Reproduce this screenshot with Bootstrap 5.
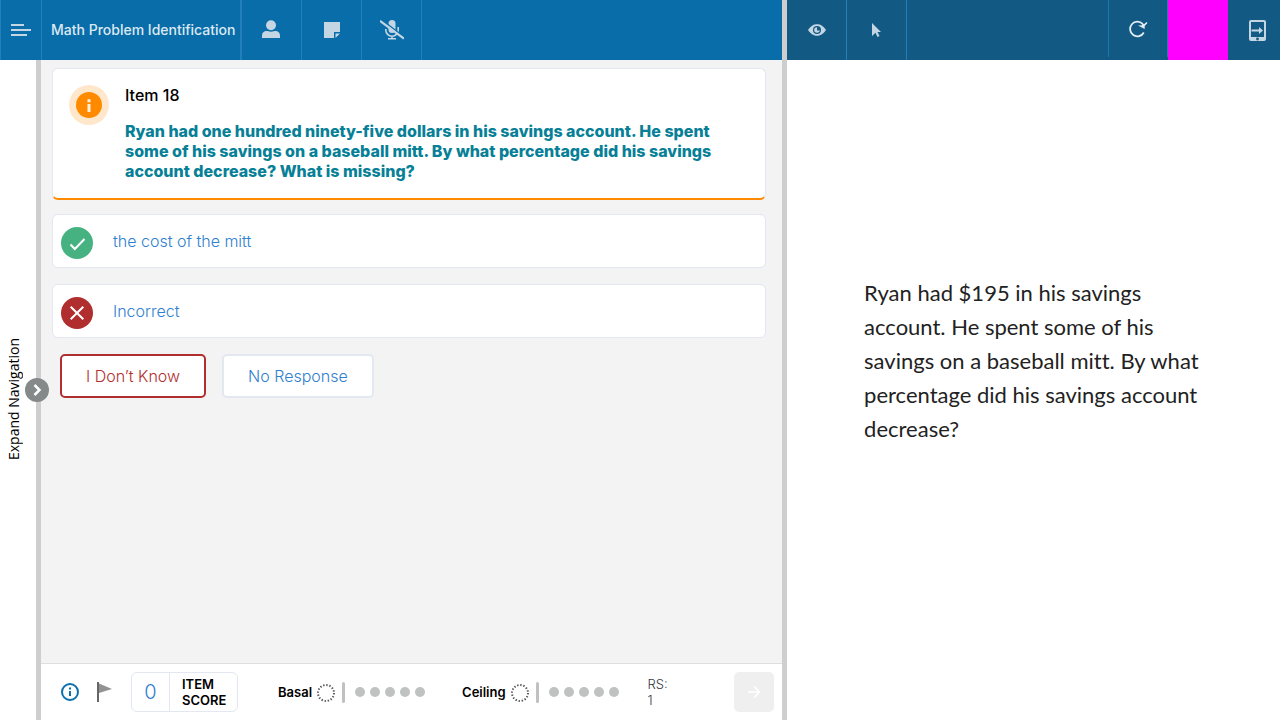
<!DOCTYPE html>
<html lang="en">
<head>
<meta charset="utf-8">
<meta name="viewport" content="width=device-width, initial-scale=1">
<title>Math Problem Identification</title>
<link href="https://cdn.jsdelivr.net/npm/bootstrap@5.3.0/dist/css/bootstrap.min.css" rel="stylesheet">
<style>
  body { font-family: Inter, "Liberation Sans", sans-serif; color: #000; background: #fff; }
  svg { display: block; }
  .examiner { flex: 0 0 61.1%; min-width: 0; }
  .examinee { min-width: 0; }
  .splitter { flex: 0 0 5px; background: #cecece; }
  .topbar { flex: 0 0 60px; background: #096da9; }
  .topbar.viewer { background: #125a84; }
  .tool { width: 60px; height: 60px; padding: 0; border: 0; border-right: 1px solid #227fb9; background: transparent; color: #c4d5e3; display: flex; align-items: center; justify-content: center; }
  .tool.menu { width: 42px; border-left: 1px solid #227fb9; }
  .tool.reload { height: 57px; border-left: 1px solid #1d78b0; color: #e3eef6; }
  .tool.last { width: 52px; border: 0; padding-left: 6px; }
  .subtest { width: 200px; padding-left: 9px; border-right: 2px solid #227fb9; color: #dce9f3; font-size: 14px; font-weight: 500; line-height: 60px; white-space: nowrap; }
  .swatch { width: 60px; background: #f0f; }
  .workspace { min-height: 0; }
  .rail { flex: 0 0 36px; background: #fff; border: 0; padding: 18px 8px 0 0; font-family: "Open Sans", sans-serif; font-size: 14px; line-height: 20px; color: #000; display: flex; align-items: center; justify-content: center; }
  .rail span { writing-mode: vertical-rl; transform: rotate(180deg); white-space: nowrap; }
  .knob { z-index: 2; width: 24px; height: 24px; right: -8px; top: 50%; margin-top: -12px; border: 0; padding: 0; border-radius: 50%; background: #858989; }
  .work { background: #f3f3f3; min-width: 0; }
  .content-area { padding: 8px 16px 8px 11px; }
  .panel { background: #fff; border: 1px solid #e2e7f1; border-radius: 6px; }
  .question { padding: 16px; gap: 16px; border-bottom: 2px solid #ff8a00; min-height: 132px; margin-bottom: 14px; }
  .halo { flex: 0 0 40px; height: 40px; }
  .question h1 { font-size: 16px; font-weight: 500; line-height: 20px; margin: 0 0 16px; }
  .question p { font-size: 16px; font-weight: 800; line-height: 20px; color: #078097; margin: 0; max-width: 600px; }
  .answer { width: 100%; height: 54px; margin-bottom: 16px; padding: 4px 8px 0; gap: 20px; text-align: left; color: #2f7fd0; font-size: 16px; font-weight: 300; }
  .answer span { padding-bottom: 4px; }
  .choice { height: 44px; padding: 0 24px; border: 2px solid #e2e7f1; border-radius: 5px; background: #fff; color: #2f7fd0; font-size: 16px; font-weight: 300; }
  .choice.chosen { border-color: #b02e2e; color: #b02e2e; }
  .statusbar { flex: 0 0 57px; background: #fff; border-top: 1px solid #dedede; padding: 0 8px 0 20px; font-size: 13px; line-height: 16px; }
  .plain { border: 0; padding: 0; background: none; }
  .flag { margin-left: 18px; }
  .score { width: 107px; height: 40px; margin-left: 18px; font-weight: 600; }
  .score output { width: 38px; line-height: 38px; border-right: 1px solid #e2e7f1; text-align: center; color: #2f7fd0; font-size: 20px; font-weight: 300; }
  .score label { padding: 3px 0 0 12px; }
  .rule-name { font-weight: 600; }
  .basal { margin-left: 40px; }
  .ceiling { margin-left: 37px; }
  .bar { width: 3px; height: 21px; border-radius: 2px; background: #bfc2c1; margin: 0 10px 0 6px; }
  .pips { gap: 5px; }
  .pip { width: 10px; height: 10px; border-radius: 50%; background: #c0c2c1; }
  .raw { margin-left: 29px; width: 24px; color: #343a40; font-weight: 300; }
  .next { width: 40px; height: 40px; padding: 0; border: 0; border-radius: 5px; background: #efefef; display: flex; align-items: center; justify-content: center; }
  .stimulus { font-family: Lato, sans-serif; font-variant-ligatures: none; font-size: 22px; line-height: 34px; color: #222; padding: 216px 70px 16px 77px; }
</style>
</head>
<body class="d-flex vh-100 overflow-hidden">
<section class="examiner d-flex flex-column">
  <header class="topbar d-flex">
    <button class="tool menu" aria-label="Menu"><svg width="20" height="14" fill="currentColor"><path d="M0 1h13v2H0zM0 6h20v2H0zM0 11h16v2H0z"/></svg></button>
    <div class="subtest">Math Problem Identification</div>
    <button class="tool" aria-label="Examinee"><svg width="20" height="20" fill="currentColor"><circle cx="9" cy="5.200" r="5"/><path d="M0 18v-2.500c0-3 2-4.500 4.500-4.500 1 0 2.500.7 4.500.7s3.500-.7 4.500-.7c2.500 0 4.500 1.500 4.500 4.500V18z"/></svg></button>
    <button class="tool" aria-label="Notes"><svg width="16" height="16" fill="currentColor"><path d="M0 0h16v10h-6v6H0zM11.500 11.500H16L11.500 16z"/></svg></button>
    <button class="tool" aria-label="Microphone off"><svg width="24" height="20" fill="none" stroke="currentColor"><rect x="8.500" y="0" width="7" height="13" rx="3.500" fill="currentColor" stroke="none"/><path stroke-width="1.600" d="M5.800 9v1a6.200 6.200 0 0 0 12.400 0V7M12 16v3M8 18.800h8"/><path stroke="#096da9" stroke-width="1.500" d="M2 0l22 17"/><path stroke-width="2.200" d="M0 1l24 17.500"/></svg></button>
  </header>
  <div class="workspace d-flex flex-grow-1">
    <div class="d-flex position-relative">
      <button class="rail"><span>Expand Navigation</span></button>
      <div class="splitter"></div>
      <button class="knob position-absolute" aria-label="Expand"><svg width="24" height="24" fill="none" stroke="#fff" stroke-width="2.500"><path d="M9.500 7l5 5-5 5"/></svg></button>
    </div>
    <main class="work flex-grow-1 d-flex flex-column">
      <div class="content-area flex-grow-1 overflow-auto">
        <div class="panel question d-flex">
          <svg class="halo" width="40" height="40"><circle cx="20" cy="20" r="20" fill="#ffe7cc"/><circle cx="20" cy="20" r="13" fill="#ff8a00"/><path fill="#fff0dc" d="M18.500 14.300h3v3h-3zM18.500 19h3v8h-3z"/></svg>
          <div><h1>Item 18</h1><p>Ryan had one hundred ninety-five dollars in his savings account. He spent some of his savings on a baseball mitt. By what percentage did his savings account decrease? What is missing?</p></div>
        </div>
        <button class="panel answer d-flex align-items-center">
          <svg width="32" height="32" fill="none" stroke="#fff" stroke-width="2"><circle cx="16" cy="16" r="16" fill="#47b281" stroke="none"/><path d="M9.500 17.500l4.300 4.500L23.500 12"/></svg><span>the cost of the mitt</span>
        </button>
        <button class="panel answer d-flex align-items-center">
          <svg width="32" height="32" fill="none" stroke="#fff" stroke-width="2"><circle cx="16" cy="16" r="16" fill="#b02e2e" stroke="none"/><path d="M9.700 9.700l12.600 12.600M22.300 9.700L9.700 22.300"/></svg><span>Incorrect</span>
        </button>
        <div class="d-flex gap-3 ps-2"><button class="choice chosen">I Don’t Know</button><button class="choice">No Response</button></div>
      </div>
      <footer class="statusbar d-flex align-items-center">
        <button class="plain" aria-label="Information"><svg width="18" height="18" fill="none" stroke="#0c70ad" stroke-width="2"><circle cx="9" cy="9" r="8"/><path d="M9 4.500v2M9 8v5"/></svg></button>
        <button class="plain flag" aria-label="Flag"><svg width="16" height="20"><path fill="#666" d="M0 0h2v20H0z"/><path fill="#929292" d="M2 1.500L15 7 2 11z"/></svg></button>
        <div class="panel score d-flex"><output id="score">0</output><label for="score">ITEM<br>SCORE</label></div>
        <div class="basal d-flex align-items-center"><span class="rule-name">Basal</span><svg class="ms-1" width="20" height="20" fill="none" stroke="#555" stroke-width="2"><circle cx="10" cy="11" r="8" stroke-dasharray="1.400 1.742"/></svg><span class="bar"></span><span class="pips d-flex"><i class="pip"></i><i class="pip"></i><i class="pip"></i><i class="pip"></i><i class="pip"></i></span></div>
        <div class="ceiling d-flex align-items-center"><span class="rule-name">Ceiling</span><svg class="ms-1" width="20" height="20" fill="none" stroke="#555" stroke-width="2"><circle cx="10" cy="11" r="8" stroke-dasharray="1.400 1.742"/></svg><span class="bar"></span><span class="pips d-flex"><i class="pip"></i><i class="pip"></i><i class="pip"></i><i class="pip"></i><i class="pip"></i></span></div>
        <div class="raw">RS: 1</div>
        <button class="next ms-auto" aria-label="Next item"><svg width="14" height="14" fill="none" stroke="#fff" stroke-width="1.500"><path d="M1 7h11M7 1.500L12.500 7 7 12.500"/></svg></button>
      </footer>
    </main>
  </div>
</section>
<div class="splitter"></div>
<section class="examinee flex-grow-1 d-flex flex-column">
  <header class="topbar viewer d-flex">
    <button class="tool" aria-label="View"><svg width="18" height="12"><path fill="#c4d5e3" d="M0 6C3 1.500 6 .3 9 .3S15 1.500 18 6c-3 4.500-6 5.700-9 5.700S3 10.500 0 6z"/><circle cx="9" cy="6" r="4" fill="#125a84"/><circle cx="9" cy="6" r="2.800" fill="#c4d5e3"/><path fill="#125a84" d="M9 3h3v3.500H9z"/></svg></button>
    <button class="tool" aria-label="Pointer"><svg width="12" height="15" fill="currentColor"><path d="M1 0l9 9H6.500l2 4-2 1-2-4.200L1 13z"/></svg></button>
    <div class="flex-grow-1"></div>
    <button class="tool reload" aria-label="Reload"><svg width="20" height="18" fill="none" stroke="currentColor" stroke-width="1.800"><path d="M15.800 12.500A7.300 7.300 0 1 1 14.700 4"/><path fill="currentColor" stroke="none" d="M10 5.500l4-.2V2.500l2 1.700L18.500 2l1 1-2.800 3v3z"/></svg></button>
    <div class="swatch"></div>
    <button class="tool last" aria-label="Send to device"><svg width="17" height="21"><path fill="#c4d5e3" fill-rule="evenodd" d="M2 0h13a2 2 0 0 1 2 2v17a2 2 0 0 1-2 2H2a2 2 0 0 1-2-2V2a2 2 0 0 1 2-2zM2 2v15h13V2z"/><circle cx="8.500" cy="19" r="1.400" fill="#125a84"/><path fill="#c4d5e3" d="M2.500 9.500H10V7l4 3.500-4 3.500v-2.500H2.500z"/></svg></button>
  </header>
  <div class="stimulus">Ryan had $195 in his savings account. He spent some of his savings on a baseball mitt. By what percentage did his savings account decrease?</div>
</section>
<script src="https://cdn.jsdelivr.net/npm/bootstrap@5.3.0/dist/js/bootstrap.bundle.min.js"></script>
</body>
</html>
